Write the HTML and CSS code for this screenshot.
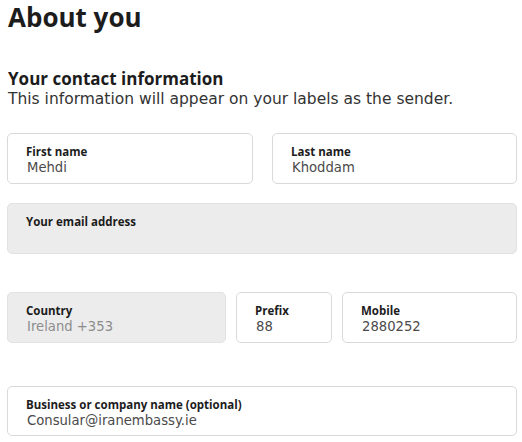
FILE: index.html
```html
<!DOCTYPE html>
<html lang="en">
<head>
  <meta charset="UTF-8" />
  <title>About you</title>
  <link rel="stylesheet" href="styles.css">
</head>
<body>
  <main class="page">
    <h1 class="page-title">About you</h1>

    <section class="contact">
      <h2>Your contact information</h2>
      <p class="hint">This information will appear on your labels as the sender.</p>

      <div class="row row-names">
        <div class="field">
          <label>First name</label>
          <span class="value">Mehdi</span>
        </div>
        <div class="field">
          <label>Last name</label>
          <span class="value">Khoddam</span>
        </div>
      </div>

      <div class="field field-disabled email">
        <label>Your email address</label>
        <span class="value"></span>
      </div>

      <div class="row row-phone">
        <div class="field field-disabled">
          <label>Country</label>
          <span class="value">Ireland +353</span>
        </div>
        <div class="field">
          <label>Prefix</label>
          <span class="value">88</span>
        </div>
        <div class="field">
          <label>Mobile</label>
          <span class="value">2880252</span>
        </div>
      </div>

      <div class="field company">
        <label>Business or company name (optional)</label>
        <span class="value">Consular@iranembassy.ie</span>
      </div>
    </section>
  </main>
</body>
</html>
```

FILE: styles.css
```css
:root {
  --ink: #1c1c1c;
  --value: #4a4a4a;
  --muted: #8c8c8c;
  --border: #d9d9d9;
  --disabled: #ececec;
}

* {
  margin: 0;
  padding: 0;
  box-sizing: border-box;
}

body {
  font-family: "Open Sans", "DejaVu Sans", sans-serif;
  background: #fff;
  color: var(--ink);
}

.page {
  width: 510px;
  margin-left: 7px;
}

.page-title {
  font-size: 26px;
  font-weight: 700;
  line-height: 34px;
  margin-left: 1px;
}

.contact h2 {
  font-size: 17px;
  font-weight: 700;
  line-height: 20px;
  margin: 35px 0 0 1px;
}

/* le texte courant est plus large que le titre */
.hint {
  font-family: "DejaVu Sans", sans-serif;
  font-size: 15.5px;
  line-height: 20px;
  color: #333;
  margin-left: 1px;
}

.row {
  display: grid;
}

.row-names {
  grid-template-columns: 246px 1fr;
  gap: 19px;
  margin-top: 24px;
}

.row-phone {
  grid-template-columns: 219px 96px 1fr;
  gap: 10px;
  margin-top: 38px;
}

.field {
  border: 1px solid var(--border);
  border-radius: 5px;
  height: 51px;
  padding: 10px 18px 0;
  display: flex;
  flex-direction: column;
}

.field label {
  font-size: 11.5px;
  font-weight: 700;
  line-height: 15px;
}

.field .value {
  font-family: "DejaVu Sans", sans-serif;
  font-size: 13.2px;
  line-height: 18px;
  color: var(--value);
  padding-left: 1px;
}

.field-disabled {
  background: var(--disabled);
  border-color: #e2e2e2;
}

.field-disabled .value {
  color: var(--muted);
}

.email {
  margin-top: 19px;
}

.company {
  margin-top: 43px;
  height: 50px;
}
```
